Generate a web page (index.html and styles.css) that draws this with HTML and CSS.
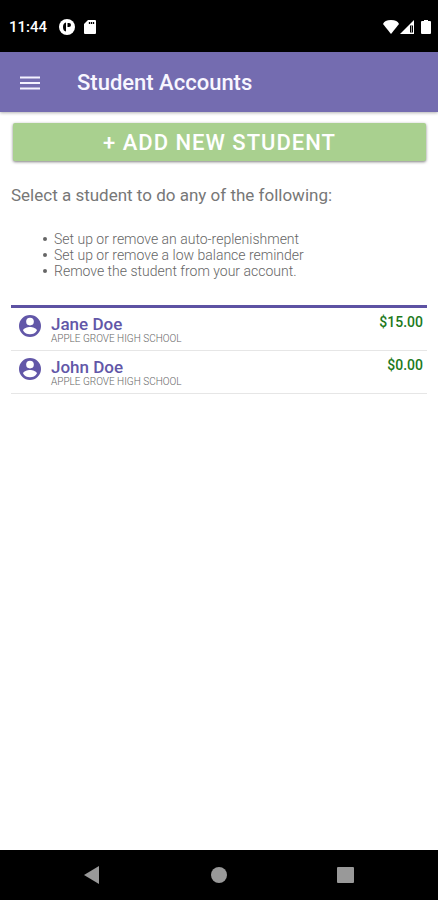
FILE: index.html
```html
<!DOCTYPE html>
<html lang="en">
<head>
<meta charset="utf-8">
<meta name="viewport" content="width=device-width, initial-scale=1">
<title>Student Accounts</title>
<link rel="stylesheet" href="styles.css">
</head>
<body>
<div class="status">
  <span class="clock">11:44</span>
  <svg class="status-app" viewBox="0 0 16 16" width="16" height="16" aria-hidden="true"><circle cx="8" cy="8" r="8" fill="#fff"/><path d="M7 3.500Q4 4 4 8t3 4.500zM8.500 4H10a2 2 0 0 1 2 2 2 2 0 0 1-2 2H8.500z" fill="#000"/></svg>
  <svg class="status-card" viewBox="0 0 12 14" width="12" height="14" aria-hidden="true"><path d="M4 0h7a1 1 0 0 1 1 1v12a1 1 0 0 1-1 1H1a1 1 0 0 1-1-1V4z" fill="#fff"/><path d="M5.500 2v2M7.500 2v2M9.500 2v2" stroke="#000" stroke-width="1.300"/></svg>
  <svg class="status-wifi" viewBox="0 0 16 14" width="16" height="14" aria-hidden="true"><path d="M0 4Q1.500 0 8 0T16 4L8 14z" fill="#fff"/></svg>
  <svg viewBox="0 0 14 14" width="14" height="14" aria-hidden="true"><path d="M14 0v14H0z" fill="#fff"/><path d="M10 5.500h3v7h-3z" fill="#000"/><path d="M11.500 5v8" stroke="#999"/></svg>
  <svg class="status-battery" viewBox="0 0 10 14" width="10" height="14" aria-hidden="true"><path d="M3 0h4v1h2a1 1 0 0 1 1 1v11a1 1 0 0 1-1 1H1a1 1 0 0 1-1-1V2a1 1 0 0 1 1-1h2z" fill="#fff"/></svg>
</div>
<header class="appbar">
  <button class="menu" type="button" aria-label="Menu"><svg viewBox="0 0 20 14" width="20" height="14" aria-hidden="true"><path d="M0 1.500h20M0 7h20M0 12.500h20" stroke="#f4f2ff" stroke-width="2"/></svg></button>
  <h1>Student Accounts</h1>
</header>
<main>
  <button class="add" type="button">+ ADD NEW STUDENT</button>
  <p class="intro">Select a student to do any of the following:</p>
  <ul class="options">
    <li>Set up or remove an auto-replenishment</li>
    <li>Set up or remove a low balance reminder</li>
    <li>Remove the student from your account.</li>
  </ul>
  <div class="students">
    <a class="student" href="#jane">
      <svg class="avatar" viewBox="2 2 20 20" width="22" height="22" aria-hidden="true"><path d="M12 2a10 10 0 1 0 0 20 10 10 0 0 0 0-20zm0 2.500a3.500 3.500 0 1 1 0 7 3.500 3.500 0 0 1 0-7zm0 15a7.500 7.500 0 0 1-6.300-3.500c.03-1.990 4-3.200 6.300-3.200s6.270 1.210 6.300 3.200a7.500 7.500 0 0 1-6.300 3.500z"/></svg>
      <span class="who"><span class="name">Jane Doe</span><span class="school">APPLE GROVE HIGH SCHOOL</span></span>
      <span class="balance">$15.00</span>
    </a>
    <a class="student" href="#john">
      <svg class="avatar" viewBox="2 2 20 20" width="22" height="22" aria-hidden="true"><path d="M12 2a10 10 0 1 0 0 20 10 10 0 0 0 0-20zm0 2.500a3.500 3.500 0 1 1 0 7 3.500 3.500 0 0 1 0-7zm0 15a7.500 7.500 0 0 1-6.300-3.500c.03-1.990 4-3.200 6.300-3.200s6.270 1.210 6.300 3.200a7.500 7.500 0 0 1-6.300 3.500z"/></svg>
      <span class="who"><span class="name">John Doe</span><span class="school">APPLE GROVE HIGH SCHOOL</span></span>
      <span class="balance">$0.00</span>
    </a>
  </div>
</main>
<nav class="system" aria-label="System">
  <button type="button" aria-label="Back"><svg viewBox="0 0 18 18" width="18" height="18" aria-hidden="true"><path d="M1 9 16 0v18z"/></svg></button>
  <button type="button" aria-label="Home"><svg viewBox="0 0 18 18" width="18" height="18" aria-hidden="true"><circle cx="9" cy="9" r="8"/></svg></button>
  <button type="button" aria-label="Recent apps"><svg viewBox="0 0 18 18" width="18" height="18" aria-hidden="true"><rect x="0" y="1" width="17" height="16" rx="1"/></svg></button>
</nav>
</body>
</html>
```
FILE: styles.css
```css
* { box-sizing: border-box; }
body {
  margin: 0;
  min-height: 100vh;
  display: flex;
  flex-direction: column;
  background: #fff;
  color: #666;
  font-family: Roboto, "Liberation Sans", sans-serif;
}
button { padding: 0; border: 0; background: none; font-family: inherit; }
svg { display: block; flex: none; }
.status {
  display: flex;
  align-items: center;
  height: 52px;
  padding: 2px 7px 0 9px;
  background: #000;
  color: #fff;
}
.clock { font-size: 15px; font-weight: 500; }
.status-app { margin-left: 12px; }
.status-card { margin-left: 9px; }
.status-wifi { margin-left: auto; margin-right: 1px; }
.status-battery { margin-left: 7px; }
.appbar {
  display: flex;
  align-items: center;
  height: 60px;
  padding: 2px 20px 0;
  background: #746cb0;
  box-shadow: 0 1px 3px #0000004d;
}
.menu { display: flex; align-items: center; width: 57px; height: 40px; }
h1 { margin: 0; color: #f8f6ff; font-size: 22px; font-weight: 500; line-height: 28px; }
main { flex: 1; padding: 11px; }
.add {
  display: block;
  width: calc(100% - 3px);
  height: 38px;
  margin: 0 1px 0 2px;
  border-radius: 2px;
  background: #a9d08f;
  box-shadow: 0 1px 3px #00000080;
  color: #fff;
  font-size: 22px;
  font-weight: 500;
  letter-spacing: 1px;
}
.intro { margin: 24px 0 26px; color: #777; font-size: 17px; line-height: 20px; }
.options {
  margin: 0 0 26px;
  padding-left: 32px;
  font-size: 14px;
  font-weight: 300;
  line-height: 16px;
  list-style: none;
}
.options li { display: flex; align-items: center; gap: 7px; }
.options li::before { content: ""; width: 4px; height: 4px; border-radius: 50%; background: #666; }
.students { border-top: 3px solid #5d52a3; }
.student {
  display: flex;
  align-items: flex-start;
  padding: 7px 4px 5px 8px;
  border-bottom: 1px solid #e6e6e6;
  color: #666;
  text-decoration: none;
}
.avatar { fill: #6257a8; }
.who { flex: 1; display: flex; flex-direction: column; margin-left: 10px; }
.name { color: #6257a8; font-size: 17px; font-weight: 500; line-height: 18px; }
.school { font-size: 10px; font-weight: 300; line-height: 12px; }
.balance { color: #1c7a1c; font-size: 14px; font-weight: 500; line-height: 14px; }
.system {
  display: grid;
  grid-template-columns: repeat(3, 1fr);
  height: 50px;
  padding: 0 28px;
  background: #000;
}
.system button { display: grid; place-items: center; }
.system svg { fill: #999; }
```
